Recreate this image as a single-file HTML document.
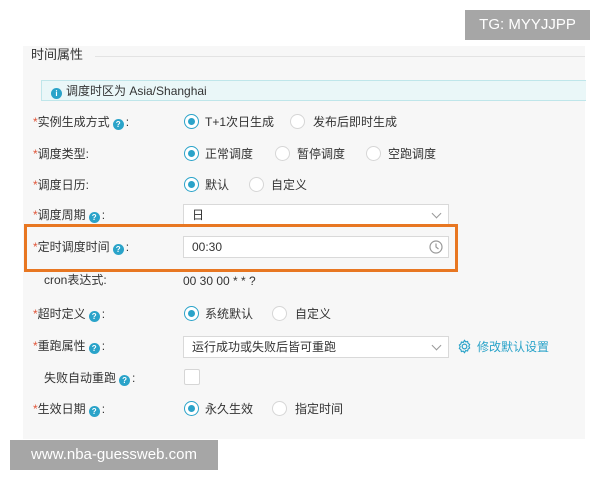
<!DOCTYPE html>
<html><head><meta charset="utf-8"><style>
*{margin:0;padding:0;box-sizing:border-box}
body{width:600px;height:480px;background:#fff;position:relative;overflow:hidden;font-family:"Liberation Sans","Noto Sans CJK SC",sans-serif;font-size:12px;color:#333}
.a{position:absolute;white-space:nowrap}
.panel{position:absolute;left:23px;top:46px;width:562px;height:393px;background:#f7f7f7}
.lbl{position:absolute;left:33px;font-size:12px;color:#333;line-height:16px}
.lbl b{color:#e0563a;font-weight:normal}
.q{display:inline-block;width:11px;height:11px;border-radius:50%;background:#2aa3c9;color:#fff;font-size:8px;line-height:11px;text-align:center;vertical-align:-1px;margin:0 2px 0 3px;font-weight:bold}
.r{position:absolute;width:15px;height:15px;border-radius:50%;border:1px solid #d6d6d6;background:#fff}
.r.on{border-color:#2aa3c9}
.r.on::after{content:"";position:absolute;left:3px;top:3px;width:7px;height:7px;border-radius:50%;background:#2aa3c9}
.t{position:absolute;line-height:16px;color:#333}
.box{position:absolute;left:183px;width:266px;height:22px;background:#fff;border:1px solid #d9d9d9;padding-left:8px;line-height:20px;font-size:12px}
.chev{position:absolute;right:8px;top:5px;width:7px;height:7px;border-right:1px solid #999;border-bottom:1px solid #999;transform:rotate(45deg)}
</style></head><body>
<div class="a" style="left:465px;top:10px;width:125px;height:30px;background:#a6a6a6;color:#fff;font-size:15px;line-height:30px;text-align:center">TG: MYYJJPP</div>
<div class="panel"></div>
<div class="a" style="left:31px;top:46px;font-size:13px;line-height:18px">时间属性</div>
<div class="a" style="left:95px;top:56px;width:490px;height:1px;background:#e3e3e3"></div>
<div class="a" style="left:41px;top:80px;width:545px;height:21px;background:#eaf7f8;border:1px solid #bfe6ea;border-right:none"></div>
<div class="a" style="left:51px;top:84px;line-height:14px"><span class="q" style="margin:0 4px 0 0">i</span>调度时区为 Asia/Shanghai</div>

<div class="lbl" style="top:114px"><b>*</b>实例生成方式<span class="q">?</span>:</div>
<div class="r on" style="left:184px;top:114px"></div><div class="t" style="left:205px;top:114px">T+1次日生成</div>
<div class="r" style="left:290px;top:114px"></div><div class="t" style="left:313px;top:114px">发布后即时生成</div>

<div class="lbl" style="top:146px"><b>*</b>调度类型:</div>
<div class="r on" style="left:184px;top:146px"></div><div class="t" style="left:205px;top:146px">正常调度</div>
<div class="r" style="left:275px;top:146px"></div><div class="t" style="left:297px;top:146px">暂停调度</div>
<div class="r" style="left:366px;top:146px"></div><div class="t" style="left:388px;top:146px">空跑调度</div>

<div class="lbl" style="top:177px"><b>*</b>调度日历:</div>
<div class="r on" style="left:184px;top:177px"></div><div class="t" style="left:205px;top:177px">默认</div>
<div class="r" style="left:249px;top:177px"></div><div class="t" style="left:271px;top:177px">自定义</div>

<div class="lbl" style="top:207px"><b>*</b>调度周期<span class="q">?</span>:</div>
<div class="box" style="top:204px">日<span class="chev"></span></div>

<div class="a" style="left:24px;top:224px;width:434px;height:48px;border:3px solid #e87722"></div>
<div class="lbl" style="top:239px"><b>*</b>定时调度时间<span class="q">?</span>:</div>
<div class="box" style="top:236px">00:30
<svg style="position:absolute;right:5px;top:3px" width="14" height="14" viewBox="0 0 14 14"><circle cx="7" cy="7" r="6" fill="none" stroke="#999" stroke-width="1.2"/><path d="M7 3.5V7l2.5 2" fill="none" stroke="#999" stroke-width="1.2"/></svg></div>

<div class="lbl" style="top:272px;left:44px">cron表达式:</div>
<div class="t" style="left:183px;top:273px">00 30 00 * * ?</div>

<div class="lbl" style="top:306px"><b>*</b>超时定义<span class="q">?</span>:</div>
<div class="r on" style="left:184px;top:306px"></div><div class="t" style="left:205px;top:306px">系统默认</div>
<div class="r" style="left:272px;top:306px"></div><div class="t" style="left:295px;top:306px">自定义</div>

<div class="lbl" style="top:338px"><b>*</b>重跑属性<span class="q">?</span>:</div>
<div class="box" style="top:336px">运行成功或失败后皆可重跑<span class="chev"></span></div>
<svg class="a" style="left:457px;top:339px" width="15" height="15" viewBox="0 0 16 16"><circle cx="8" cy="8" r="2.5" fill="none" stroke="#2aa3c9" stroke-width="1.3"/><path d="M8 1.5l1.3 1.6 2-.5.5 2 1.7 1.2-.9 1.9.9 1.9-1.7 1.2-.5 2-2-.5L8 14.5l-1.3-1.6-2 .5-.5-2-1.7-1.2.9-1.9-.9-1.9 1.7-1.2.5-2 2 .5z" fill="none" stroke="#2aa3c9" stroke-width="1.2"/></svg>
<div class="t" style="left:477px;top:339px;color:#2aa3c9">修改默认设置</div>

<div class="lbl" style="top:370px;left:44px">失败自动重跑<span class="q">?</span>:</div>
<div class="a" style="left:184px;top:369px;width:16px;height:16px;background:#fff;border:1px solid #d6d6d6;border-radius:2px"></div>

<div class="lbl" style="top:401px"><b>*</b>生效日期<span class="q">?</span>:</div>
<div class="r on" style="left:184px;top:401px"></div><div class="t" style="left:205px;top:401px">永久生效</div>
<div class="r" style="left:272px;top:401px"></div><div class="t" style="left:295px;top:401px">指定时间</div>

<div class="a" style="left:10px;top:440px;width:208px;height:30px;background:#a6a6a6;color:#fff;font-size:15px;line-height:30px;text-align:center">www.nba-guessweb.com</div>
</body></html>
